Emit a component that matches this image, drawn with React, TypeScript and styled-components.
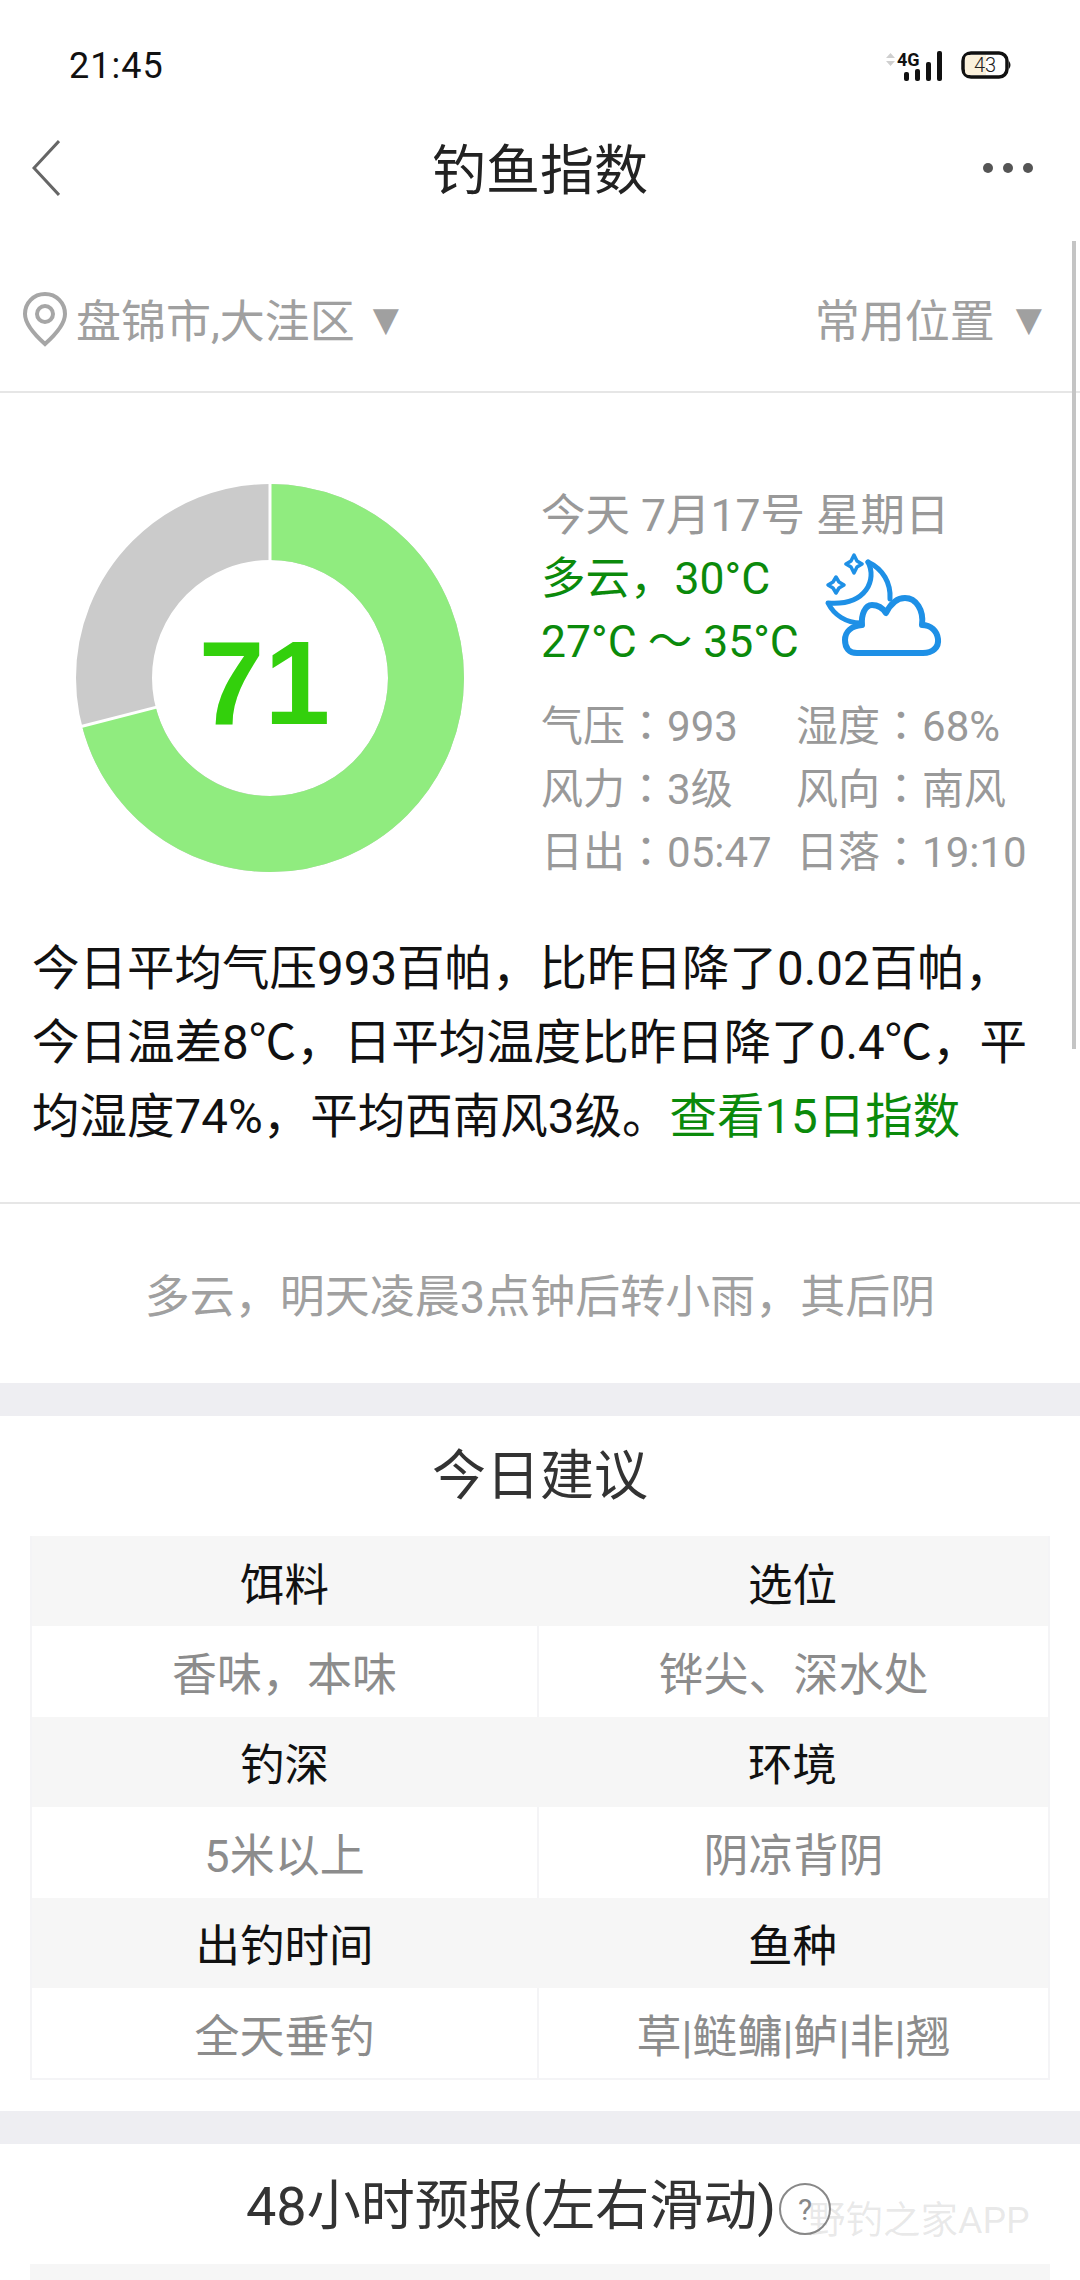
import React from "react";
import styled, { createGlobalStyle } from "styled-components";

const GlobalStyle = createGlobalStyle`
  html, body { margin: 0; padding: 0; background: #fff; }
  body { font-family: Roboto, "Noto Sans CJK SC", sans-serif; }
  * { box-sizing: border-box; }
`;

const Page = styled.div`
  position: relative;
  width: 1080px;
  height: 2280px;
  overflow: hidden;
  background: #fff;
`;

const StatusBar = styled.div`
  height: 130px;
  padding: 0 69px;
  display: flex;
  align-items: center;
  justify-content: space-between;
`;

const Clock = styled.span`
  font-size: 36px;
  color: #111;
  letter-spacing: 1px;
  padding-top: 2px;
`;

const StatusIcons = styled.div`
  display: flex;
  align-items: center;
  margin-right: -1px;
`;

const Header = styled.div`
  height: 76px;
  padding: 0 47px;
  display: grid;
  grid-template-columns: 1fr auto 1fr;
  align-items: center;
`;

const BackSlot = styled.div`
  display: flex;
  margin-left: -15px;
`;

const HeaderTitle = styled.div`
  height: 76px;
  font-size: 54px;
  color: #222;
  line-height: 84px;
`;

const MoreSlot = styled.div`
  justify-self: end;
  display: flex;
`;

const LocationBar = styled.div`
  height: 187px;
  padding: 40px 38px 0 22px;
  display: flex;
  align-items: center;
  justify-content: space-between;
  border-bottom: 2px solid #e6e6e6;
`;

const LocationGroup = styled.div`
  display: flex;
  align-items: center;
  gap: 8px;
  font-size: 45px;
  color: #a0a0a0;
`;

const Caret = styled.span<{ $wide?: boolean }>`
  font-family: "DejaVu Sans", sans-serif;
  font-size: 34px;
  margin-left: ${p => (p.$wide ? "13px" : "10px")};
`;

const Summary = styled.section`
  height: 811px;
  padding-top: 91px;
  border-bottom: 2px solid #e6e6e6;
`;

const Overview = styled.div`
  display: flex;
  padding-left: 76px;
`;

const Gauge = styled.div`
  position: relative;
  width: 388px;
  height: 388px;
  flex: none;
`;

const GaugeValue = styled.div`
  position: absolute;
  inset: 0;
  padding: 10px 11px 0 0;
  display: flex;
  align-items: center;
  justify-content: center;
  font-size: 118px;
  font-weight: 700;
  color: #33d00c;
  font-family: "Liberation Sans", sans-serif;
`;

const WeatherInfo = styled.div`
  margin-left: 77px;
  margin-top: 1px;
`;

const DateLine = styled.div`
  font-size: 44.5px;
  line-height: 63px;
  color: #999;
  white-space: nowrap;
`;

const TempRow = styled.div`
  display: flex;
  align-items: flex-start;
`;

const TempLines = styled.div`
  font-size: 44.5px;
  line-height: 63px;
  color: #0b8a0b;
  white-space: nowrap;
`;

const WeatherIcon = styled.svg`
  width: 120px;
  height: 108px;
  margin: 5px 0 0 26px;
`;

const Stats = styled.div`
  margin-top: 21px;
  display: grid;
  grid-template-columns: 255px auto;
  font-size: 42px;
  line-height: 63px;
  color: #999;
  white-space: nowrap;
`;

const Colon = styled.span`
  font-family: "Noto Sans CJK TC", sans-serif;
  line-height: 0;
`;

const Paragraph = styled.p`
  margin: 48px 0 0;
  padding: 0 32px;
  font-size: 47.5px;
  line-height: 74px;
  color: #111;
  white-space: nowrap;
`;

const GreenLink = styled.span`
  color: #0b8a0b;
`;

const Forecast = styled.div`
  height: 179px;
  display: flex;
  align-items: center;
  justify-content: center;
  font-size: 45px;
  color: #a0a0a0;
`;

const Band = styled.div`
  height: 33px;
  background: #eeeef2;
`;

const SectionTitle = styled.div<{ $lift?: number }>`
  height: 120px;
  padding-bottom: ${p => p.$lift ?? 6}px;
  display: flex;
  align-items: center;
  justify-content: center;
  font-size: 54px;
  color: #333;
`;

const AdviceTable = styled.div`
  margin: 0 30px;
  display: grid;
  grid-template-columns: 505px 511px;
  grid-auto-rows: 90.4px;
  border: 2px solid #f4f4f6;
  border-top: 0;
`;

const Cell = styled.div<{ $head?: boolean }>`
  display: flex;
  align-items: center;
  justify-content: center;
  font-size: ${p => (p.$head ? "44.5px" : "45px")};
  color: ${p => (p.$head ? "#111" : "#8c8c8c")};
  background: ${p => (p.$head ? "#f6f6f6" : "#fff")};
  border-left: ${p => (p.$head ? "0" : "2px solid #f4f4f6")};
  &:nth-child(odd) {
    border-left: 0;
  }
`;

const Gap = styled.div`
  height: 31px;
`;

const TitleWithHelp = styled(SectionTitle)`
  justify-content: flex-start;
  padding-left: 246px;
  gap: 3px;
`;

const HelpBadge = styled.span`
  width: 52px;
  height: 52px;
  margin-top: 16px;
  border: 2px solid #888;
  border-radius: 50%;
  display: flex;
  align-items: center;
  justify-content: center;
  font-size: 30px;
  color: #888;
`;

const HourlyHead = styled.div`
  height: 60px;
  margin: 0 30px;
  background: #f6f6f6;
`;

const Scrollbar = styled.div`
  position: absolute;
  top: 241px;
  right: 4px;
  width: 4px;
  height: 808px;
  background: #c4c4c4;
`;

/* the reference's watermark really does sit over the help badge */
const Watermark = styled.div`
  position: absolute;
  left: 808px;
  top: 2198px;
  font-size: 37.5px;
  line-height: 44px;
  color: rgba(120, 120, 120, 0.16);
`;

const SignalIcon = () => (
  <svg width="78" height="32" viewBox="0 0 78 32">
    <path d="M4 9 L8.5 4 L13 9Z M4 12 L8.5 17 L13 12Z" fill="#cfcfcf" />
    <text x="15" y="17" fontSize="18" fontWeight="700" fill="#111" fontFamily="Roboto, sans-serif">4G</text>
    <rect x="22" y="23" width="5" height="9" rx="2" fill="#111" />
    <rect x="33" y="20" width="5" height="12" rx="2" fill="#111" />
    <rect x="44" y="13" width="5" height="19" rx="2" fill="#111" />
    <rect x="55" y="2" width="5" height="30" rx="2" fill="#111" />
  </svg>
);

const BatteryIcon = () => (
  <svg width="52" height="28" viewBox="0 0 52 28">
    <rect x="3" y="2" width="44" height="24" rx="8" fill="#fff" stroke="#111" strokeWidth="3.5" />
    <path d="M9 4 H26 V24 H9 Q5 24 5 20 V8 Q5 4 9 4Z" fill="#fbf1dc" />
    <path d="M49 10 Q52 14 49 18Z" fill="#111" />
    <text x="25" y="21" fontSize="20" fontWeight="300" textAnchor="middle" fill="#222" fontFamily="Roboto, sans-serif">43</text>
  </svg>
);

const BackIcon = () => (
  <svg width="28" height="56" viewBox="0 0 28 56">
    <path d="M27 1 L2 28 L27 55" fill="none" stroke="#666" strokeWidth="3" />
  </svg>
);

const MoreIcon = () => (
  <svg width="50" height="12" viewBox="0 0 50 12">
    <circle cx="5" cy="6" r="5" fill="#555" />
    <circle cx="25" cy="6" r="5" fill="#555" />
    <circle cx="45" cy="6" r="5" fill="#555" />
  </svg>
);

const PinIcon = () => (
  <svg width="46" height="56" viewBox="0 0 46 56">
    <path
      d="M23 3 C11.5 3 3 12 3 23 C3 34 14 45 23 53 C32 45 43 34 43 23 C43 12 34.5 3 23 3Z"
      fill="none"
      stroke="#a6a6a6"
      strokeWidth="4"
    />
    <circle cx="23" cy="23" r="8" fill="none" stroke="#a6a6a6" strokeWidth="4" />
  </svg>
);

const DonutChart = ({ value }: { value: number }) => {
  const r = 156;
  const circ = 2 * Math.PI * r;
  const angle = (value / 100) * 2 * Math.PI;
  const outerX = 194 + 196 * Math.sin(angle);
  const outerY = 194 - 196 * Math.cos(angle);
  const innerX = 194 + 116 * Math.sin(angle);
  const innerY = 194 - 116 * Math.cos(angle);
  return (
    <svg width="388" height="388" viewBox="0 0 388 388">
      <circle cx="194" cy="194" r={r} fill="none" stroke="#cbcbcb" strokeWidth="76" />
      <circle
        cx="194"
        cy="194"
        r={r}
        fill="none"
        stroke="#90ec7f"
        strokeWidth="76"
        strokeDasharray={`${(circ * value) / 100} ${circ}`}
        transform="rotate(-90 194 194)"
      />
      <path d="M194 0 V78" stroke="#fff" strokeWidth="3" />
      <path d={`M${outerX} ${outerY} L${innerX} ${innerY}`} stroke="#fff" strokeWidth="3" />
    </svg>
  );
};

const MoonCloudIcon = () => (
  <WeatherIcon viewBox="0 0 120 108" fill="none" stroke="#1e90e6" strokeLinejoin="round" strokeLinecap="round">
    <path d="M43 9 C52 26 42 53 3 50 C9 62 21 70 36 70" strokeWidth="5" />
    <path d="M43 9 C58 16 66 30 65 46" strokeWidth="5" />
    <path d="M29 2 L32 8 L37 11 L32 14 L29 20 L26 14 L21 11 L26 8Z" strokeWidth="3.5" />
    <path d="M11 24 L14 29 L19 32 L14 35 L11 40 L8 35 L3 32 L8 29Z" strokeWidth="3.5" />
    <path
      d="M32 100 H98 C108 100 114 94 113 86 C112 78 106 72 97 72 C99 57 91 45 80 45 C71 45 65 52 61 60 C57 54 52 52 47 52 C40 52 36 62 37 72 C26 73 20 79 20 87 C20 95 24 100 32 100 Z"
      strokeWidth="6"
    />
  </WeatherIcon>
);

const adviceRows = [
  ["饵料", "选位"],
  ["香味，本味", "铧尖、深水处"],
  ["钓深", "环境"],
  ["5米以上", "阴凉背阴"],
  ["出钓时间", "鱼种"],
  ["全天垂钓", "草|鲢鳙|鲈|非|翘"],
];

const stats = [
  ["气压", "993"],
  ["湿度", "68%"],
  ["风力", "3级"],
  ["风向", "南风"],
  ["日出", "05:47"],
  ["日落", "19:10"],
];

const App = () => {
  return (
    <Page>
      <GlobalStyle />
      <StatusBar>
        <Clock>21:45</Clock>
        <StatusIcons>
          <SignalIcon />
          <BatteryIcon />
        </StatusIcons>
      </StatusBar>
      <Header>
        <BackSlot>
          <BackIcon />
        </BackSlot>
        <HeaderTitle>钓鱼指数</HeaderTitle>
        <MoreSlot>
          <MoreIcon />
        </MoreSlot>
      </Header>
      <LocationBar>
        <LocationGroup>
          <PinIcon />
          盘锦市,大洼区<Caret>▼</Caret>
        </LocationGroup>
        <LocationGroup>
          常用位置<Caret $wide>▼</Caret>
        </LocationGroup>
      </LocationBar>
      <Summary>
        <Overview>
          <Gauge>
            <DonutChart value={71} />
            <GaugeValue>71</GaugeValue>
          </Gauge>
          <WeatherInfo>
            <DateLine>今天 7月17号 星期日</DateLine>
            <TempRow>
              <TempLines>
                多云，30°C
                <br />
                27°C ～ 35°C
              </TempLines>
              <MoonCloudIcon />
            </TempRow>
            <Stats>
              {stats.map(([label, value]) => (
                <div key={label}>
                  {label}
                  <Colon>：</Colon>
                  {value}
                </div>
              ))}
            </Stats>
          </WeatherInfo>
        </Overview>
        <Paragraph>
          今日平均气压993百帕，比昨日降了0.02百帕，
          <br />
          今日温差8℃，日平均温度比昨日降了0.4℃，平
          <br />
          均湿度74%，平均西南风3级。<GreenLink>查看15日指数</GreenLink>
        </Paragraph>
      </Summary>
      <Forecast>多云，明天凌晨3点钟后转小雨，其后阴</Forecast>
      <Band />
      <SectionTitle $lift={10}>今日建议</SectionTitle>
      <AdviceTable>
        {adviceRows.map((row, i) =>
          row.map(text => (
            <Cell key={text} $head={i % 2 === 0}>
              {text}
            </Cell>
          ))
        )}
      </AdviceTable>
      <Gap />
      <Band />
      <TitleWithHelp>
        48小时预报(左右滑动)
        <HelpBadge>?</HelpBadge>
      </TitleWithHelp>
      <HourlyHead />
      <Scrollbar />
      <Watermark>野钓之家APP</Watermark>
    </Page>
  );
};

export default App;
